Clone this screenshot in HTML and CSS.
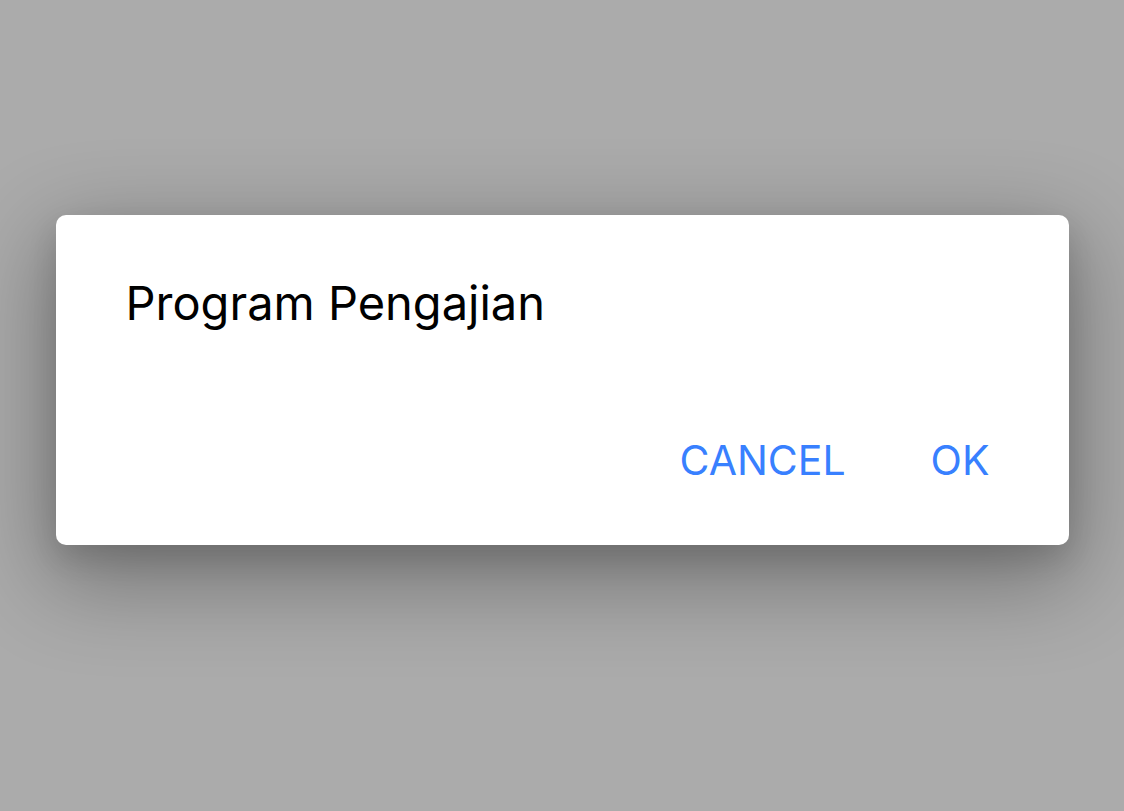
FILE: index.html
```html
<!DOCTYPE html>
<html lang="ms">
<head>
<meta charset="utf-8">
<title>Program Pengajian</title>
<link rel="stylesheet" href="styles.css">
</head>
<body>
<div class="backdrop">
  <div class="alert" role="alertdialog" aria-labelledby="alert-title">
    <h2 class="alert-title" id="alert-title">Program Pengajian</h2>
    <div class="alert-buttons">
      <button class="alert-button" type="button">Cancel</button>
      <button class="alert-button" type="button">OK</button>
    </div>
  </div>
</div>
</body>
</html>
```
FILE: styles.css
```css
html, body {
  margin: 0;
  padding: 0;
  height: 100%;
}

body {
  background: #ababab;
  font-family: Inter, Roboto, "Noto Sans", sans-serif;
}

.backdrop {
  height: 100%;
  display: flex;
  align-items: center;
  justify-content: center;
  padding-bottom: 51px;
  box-sizing: border-box;
}

.alert {
  width: 1013px;
  height: 330px;
  box-sizing: border-box;
  background: #fff;
  border-radius: 10px;
  box-shadow: 0 28px 90px 10px rgba(0, 0, 0, 0.32), 0 14px 30px rgba(0, 0, 0, 0.12);
  display: flex;
  flex-direction: column;
  padding: 60px 79px 0 70px;
}

.alert-title {
  margin: 0;
  font-size: 47px;
  font-weight: 400;
  line-height: 56px;
  color: #000;
}

.alert-buttons {
  display: flex;
  justify-content: flex-end;
  gap: 85px;
  margin-top: 105px;
}

.alert-button {
  border: 0;
  background: none;
  padding: 0;
  font-family: inherit;
  font-size: 41px;
  line-height: 48px;
  color: #3880ff;
  text-transform: uppercase;
}
```
